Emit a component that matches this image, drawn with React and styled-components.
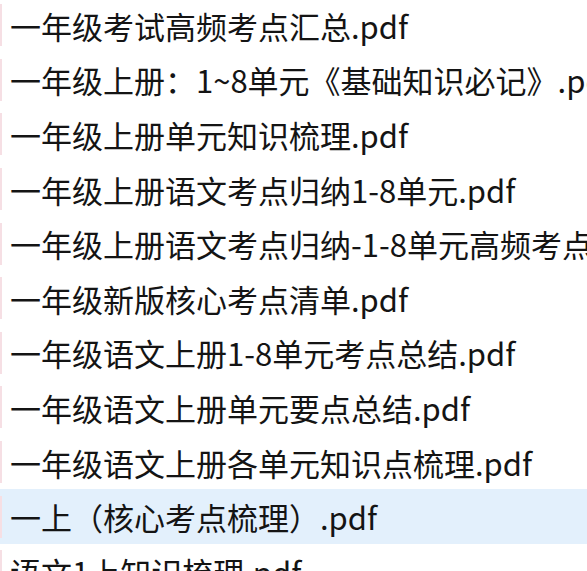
import styled, { createGlobalStyle } from 'styled-components';

const GlobalStyle = createGlobalStyle`
  html, body {
    margin: 0;
    padding: 0;
    background: #ffffff;
    overflow: hidden;
  }
`;

const files = [
    '一年级考试高频考点汇总.pdf',
    '一年级上册：1~8单元《基础知识必记》.pdf',
    '一年级上册单元知识梳理.pdf',
    '一年级上册语文考点归纳1-8单元.pdf',
    '一年级上册语文考点归纳-1-8单元高频考点.pdf',
    '一年级新版核心考点清单.pdf',
    '一年级语文上册1-8单元考点总结.pdf',
    '一年级语文上册单元要点总结.pdf',
    '一年级语文上册各单元知识点梳理.pdf',
    '一上（核心考点梳理）.pdf',
    '语文1上知识梳理.pdf',
];

function App() {
    return (
        <>
            <GlobalStyle />
            <FileList>
                {files.map((name, i) => (
                    <FileRow key={name} selected={i === 9}>
                        <IconEdge />
                        <FileName>{name}</FileName>
                    </FileRow>
                ))}
            </FileList>
        </>
    );
}

export default App;

const FileList = styled.ul`
    list-style: none;
    margin: -2px 0 0 0;
    padding: 0;
    width: 587px;
    height: 573px;
    overflow: hidden;
`;

const FileRow = styled.li`
    display: flex;
    align-items: center;
    height: 54.6px;
    background: ${({ selected }) => (selected ? '#e3f0fc' : 'transparent')};
`;

const IconEdge = styled.span`
    flex: none;
    width: 2px;
    height: 42px;
    background: #f6dfe4;
`;

const FileName = styled.span`
    margin-left: 8px;
    white-space: nowrap;
    font-family: "Noto Sans CJK SC", "Noto Sans", sans-serif;
    font-size: 31px;
    line-height: 1;
    color: #141414;
`;
